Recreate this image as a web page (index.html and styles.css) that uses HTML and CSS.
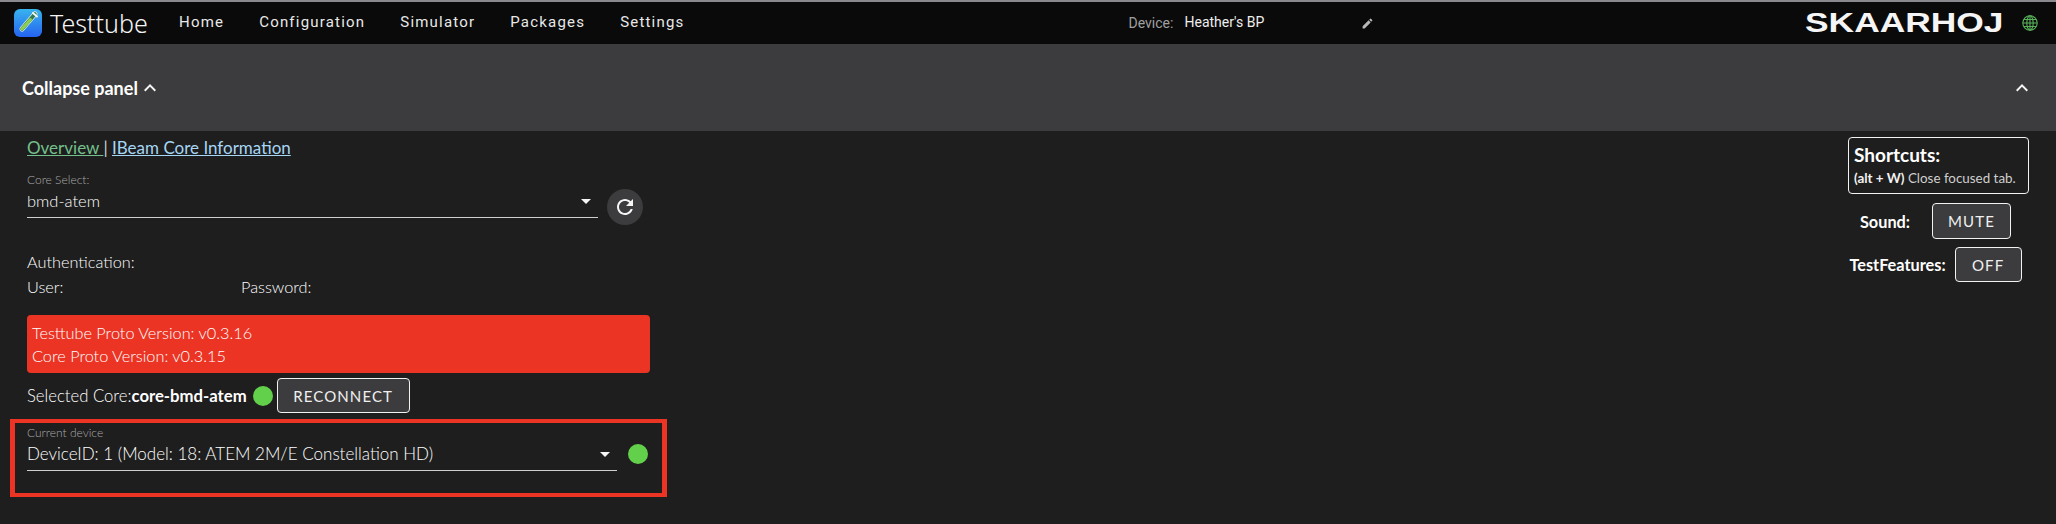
FILE: index.html
```html
<!DOCTYPE html>
<html lang="en">
<head>
<meta charset="utf-8">
<title>Testtube</title>
<link rel="stylesheet" href="styles.css">
</head>
<body>
<header class="topbar">
  <div class="brand">
    <svg class="logo" viewBox="0 0 28 28" aria-hidden="true">
      <defs>
        <linearGradient id="lg" x1="0" y1="0" x2="0" y2="1">
          <stop offset="0" stop-color="#38b4ee"/>
          <stop offset="1" stop-color="#2563f0"/>
        </linearGradient>
      </defs>
      <rect width="28" height="28" rx="6" fill="url(#lg)"/>
      <path d="M21 5 L8 20" stroke="#dfeee0" stroke-width="5" stroke-linecap="round"/>
      <path d="M21 5 L8 20" stroke="#2f7a55" stroke-width="3.6" stroke-linecap="round"/>
      <path d="M16.5 10.5 L8 20" stroke="#8fd14f" stroke-width="3" stroke-linecap="round"/>
      <path d="M19 4 L23 7.5" stroke="#f2f5f5" stroke-width="2" stroke-linecap="round"/>
    </svg>
    <span class="brand-name">Testtube</span>
  </div>
  <nav class="nav">
    <a>Home</a>
    <a>Configuration</a>
    <a>Simulator</a>
    <a>Packages</a>
    <a>Settings</a>
  </nav>
  <div class="device">
    <span class="device-label">Device:</span>
    <span class="device-name">Heather's BP</span>
    <svg class="pencil" viewBox="0 0 24 24" aria-hidden="true"><path d="M3 17.25V21h3.75L17.81 9.94l-3.75-3.75L3 17.25zM20.71 7.04a1 1 0 0 0 0-1.41l-2.34-2.34a1 1 0 0 0-1.41 0l-1.83 1.83 3.75 3.75 1.83-1.83z"/></svg>
  </div>
  <div class="maker">
    <span class="wordmark">SKAARHOJ</span>
    <svg class="globe" viewBox="0 0 16 16" aria-hidden="true">
      <circle cx="8" cy="8" r="7.2"/>
      <ellipse cx="8" cy="8" rx="3.2" ry="7.2"/>
      <path d="M8 .8V15.2M.8 8H15.2M1.8 4.5H14.2M1.8 11.5H14.2"/>
    </svg>
  </div>
</header>

<section class="panel-head">
  <span class="collapse">Collapse panel
    <svg class="chev" viewBox="6 8 12 8" aria-hidden="true"><path d="M12 8l-6 6 1.41 1.41L12 10.83l4.59 4.58L18 14z"/></svg>
  </span>
  <svg class="chev chev-right" viewBox="6 8 12 8" aria-hidden="true"><path d="M12 8l-6 6 1.41 1.41L12 10.83l4.59 4.58L18 14z"/></svg>
</section>

<main class="content">
  <div class="left">
    <div class="tabs"><a class="tab-active">Overview </a><span class="tab-sep">|</span> <a class="tab-link">IBeam Core Information</a></div>

    <div class="core-row">
      <div class="select core-select">
        <div class="select-label">Core Select:</div>
        <div class="select-value"><span>bmd-atem</span><i class="caret"></i></div>
      </div>
      <button class="icon-btn" type="button">
        <svg viewBox="0 0 24 24" aria-hidden="true"><path d="M17.65 6.35C16.2 4.9 14.21 4 12 4c-4.42 0-7.99 3.58-7.99 8s3.57 8 7.99 8c3.73 0 6.84-2.55 7.73-6h-2.08c-.82 2.33-3.04 4-5.65 4-3.31 0-6-2.69-6-6s2.69-6 6-6c1.66 0 3.14.69 4.22 1.78L13 11h7V4l-2.35 2.35z"/></svg>
      </button>
    </div>

    <div class="auth">Authentication:</div>
    <div class="creds"><span class="cred-user">User:</span><span>Password:</span></div>

    <div class="alert">
      <div>Testtube Proto Version: v0.3.16</div>
      <div>Core Proto Version: v0.3.15</div>
    </div>

    <div class="selected">
      <span>Selected Core:<b>core-bmd-atem</b></span>
      <i class="dot"></i>
      <button class="btn btn-reconnect" type="button">RECONNECT</button>
    </div>

    <div class="highlight">
      <div class="select device-select">
        <div class="select-label">Current device</div>
        <div class="select-value"><span>DeviceID: 1 (Model: 18: ATEM 2M/E Constellation HD)</span><i class="caret"></i></div>
      </div>
      <i class="dot dot-device"></i>
    </div>
  </div>

  <aside class="right">
    <div class="shortcuts">
      <div class="shortcuts-title">Shortcuts:</div>
      <div class="shortcuts-line"><b>(alt + W)</b> Close focused tab.</div>
    </div>
    <div class="opt opt-sound"><span>Sound:</span><button class="btn btn-mute" type="button">MUTE</button></div>
    <div class="opt opt-test"><span>TestFeatures:</span><button class="btn btn-off" type="button">OFF</button></div>
  </aside>
</main>
</body>
</html>
```
FILE: styles.css
```css
* { box-sizing: border-box; }
html, body { margin: 0; height: 524px; overflow: hidden; }
body {
  background: #1e1e1e;
  color: #fff;
  font-family: Lato, "Noto Sans", sans-serif;
  font-size: 16.3px;
  font-weight: 300;
  border-top: 2px solid #8a8a8e;
}
.topbar {
  height: 42px;
  background: #0a0a0a;
  display: flex;
  align-items: center;
  padding: 0 18px 0 14px;
}
.brand { display: flex; align-items: center; gap: 8px; width: 165px; }
.logo { width: 28px; height: 28px; flex: none; }
.brand-name { font-family: "Noto Sans", sans-serif; font-size: 25px; line-height: 30px; color: #f4f4f4; }
.nav { display: flex; gap: 35px; margin-bottom: 2px; font-family: Roboto, sans-serif; font-size: 15px; font-weight: 400; letter-spacing: 1.2px; color: #e8e8e8; }
.device { display: flex; align-items: center; margin-left: 444px; font-family: Roboto, sans-serif; font-size: 14px; font-weight: 400; }
.device-label { color: #a0a0a0; width: 56px; }
.device-name { color: #eee; width: 176px; margin-bottom: 2px; }
.pencil { width: 13px; height: 13px; fill: #b8b8b8; }
.maker { margin-left: auto; display: flex; align-items: center; gap: 18px; }
.wordmark {
  font-family: "Liberation Sans", sans-serif;
  font-weight: 700;
  font-size: 27px;
  line-height: 24px;
  color: #f5f5f5;
  display: inline-block;
  transform: scaleX(1.31);
  transform-origin: right center;
}
.globe { width: 16px; height: 16px; fill: none; stroke: #58b15a; stroke-width: 1.1; }

.panel-head {
  height: 87px;
  background: #3c3c3e;
  display: flex;
  align-items: center;
  justify-content: space-between;
  padding: 0 28px 0 22px;
  font-size: 18px;
  font-weight: 700;
}
.collapse { display: flex; align-items: center; gap: 6px; }
.chev { width: 12px; height: 8px; fill: #f5f5f5; }

.content { display: flex; justify-content: space-between; padding: 0 27px; }
.left { width: 640px; padding-top: 6px; }
.tabs { font-size: 17px; line-height: 22px; font-weight: 400; }
.tab-active { color: #74c08c; text-decoration: underline; }
.tab-sep { color: #cfcfcf; }
.tab-link { color: #a6d6f5; text-decoration: underline; }

.core-row { display: flex; gap: 9px; margin-top: 14px; }
.select-label { font-size: 12px; line-height: 14px; color: #aaa; }
.select-value {
  display: flex;
  justify-content: space-between;
  align-items: center;
  margin-top: 5px;
  padding: 0 7px 7px 0;
  line-height: 18px;
  border-bottom: 1px solid #cfcfcf;
  font-size: 16.5px;
}
.core-select { width: 571px; }
.device-select .select-value { font-size: 17px; }
.caret { width: 0; height: 0; border: 5px solid transparent; border-top: 5px solid #f5f5f5; border-bottom: 0; }
.icon-btn {
  width: 36px;
  height: 36px;
  margin-top: 16px;
  padding: 0;
  border: 0;
  border-radius: 50%;
  background: #3c3c3e;
  display: flex;
  align-items: center;
  justify-content: center;
}
.icon-btn svg { width: 24px; height: 24px; fill: #f5f5f5; }

.auth { margin-top: 26px; line-height: 22px; }
.creds { display: flex; margin-top: 3px; line-height: 22px; }
.cred-user { width: 214px; }

.alert {
  margin-top: 17px;
  width: 623px;
  padding: 6px 5px;
  line-height: 23px;
  background: #ec3424;
  border-radius: 4px;
}

.selected { display: flex; align-items: center; margin-top: 5px; height: 35px; font-size: 16.7px; }
.selected b { font-weight: 700; }
.dot { display: block; flex: none; width: 20px; height: 20px; border-radius: 50%; background: #62d04a; }
.selected .dot { margin-left: 6px; }
.btn {
  height: 36px;
  padding: 0;
  border: 1px solid #f2f2f2;
  border-radius: 4px;
  background: #3c3c3e;
  color: #f0f0f0;
  font-family: Lato, sans-serif;
  font-size: 15px;
  font-weight: 400;
  letter-spacing: 1.1px;
}
.btn-reconnect { width: 133px; height: 35px; margin-left: 4px; }

.highlight {
  display: flex;
  width: 657px;
  height: 78px;
  margin: 6px 0 0 -17px;
  padding: 3px 0 0 12px;
  border: 4px solid #ec3424;
  border-width: 4px 5px;
}
.device-select { width: 590px; }
.dot-device { margin: 18px 0 0 11px; }

.right { width: 181px; padding-top: 6px; display: flex; flex-direction: column; align-items: center; }
.shortcuts {
  width: 181px;
  height: 57px;
  border: 1px solid #f2f2f2;
  border-radius: 4px;
  padding: 6px 5px 0;
}
.shortcuts-title { font-size: 19px; line-height: 22px; font-weight: 700; }
.shortcuts-line { font-size: 13.4px; line-height: 18px; margin-top: 3px; color: #cfcfcf; font-weight: 400; }
.shortcuts-line b { color: #f2f2f2; }
.opt { display: flex; align-items: center; font-size: 16.3px; font-weight: 700; padding-right: 6px; }
.opt-sound { margin-top: 9px; gap: 22px; }
.opt-test { margin-top: 8px; gap: 9px; }
.btn-mute { width: 79px; }
.btn-off { width: 67px; height: 35px; }
```
